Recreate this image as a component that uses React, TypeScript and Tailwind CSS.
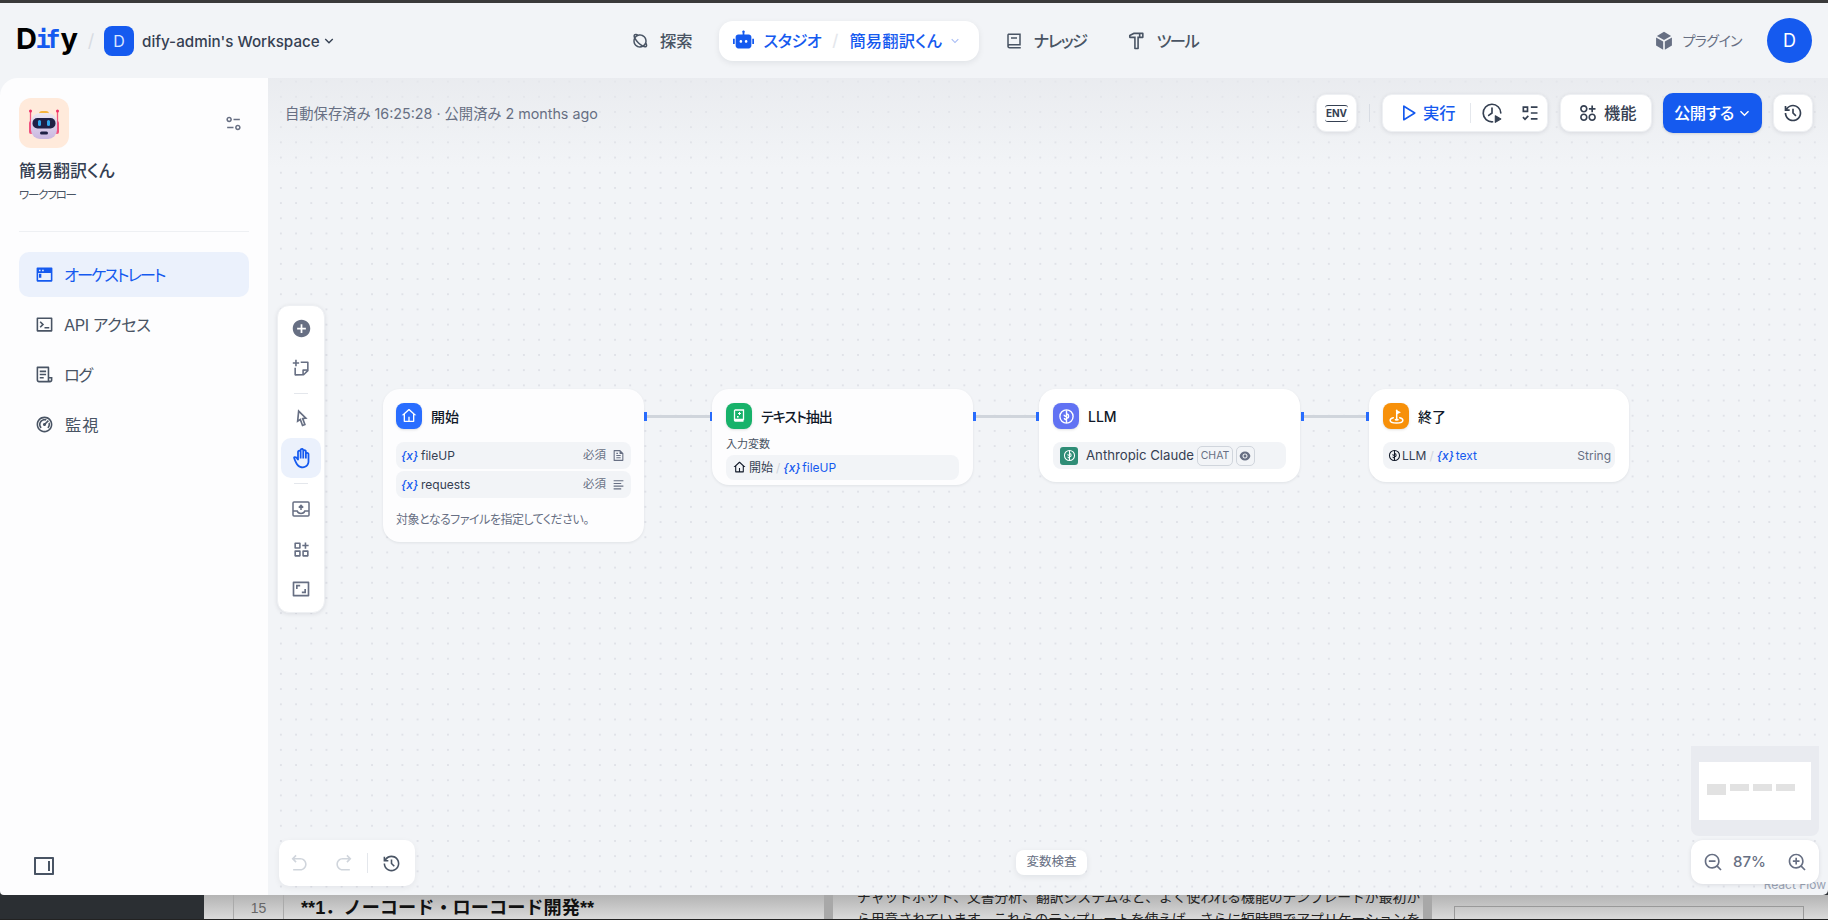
import React from "react";
import {
  RiPlanetLine, RiRobot2Fill, RiBook2Line, RiHammerLine, RiBox3Fill, RiArrowDownSLine, RiEqualizer2Line,
  RiTerminalWindowFill, RiTerminalBoxLine, RiFileList3Line, RiDashboard2Line, RiAddCircleFill, RiStickyNoteAddLine,
  RiCursorLine, RiHand, RiFunctionAddLine, RiAspectRatioLine, RiPlayLargeLine, RiListCheck3,
  RiApps2AddLine, RiHistoryLine, RiArrowGoBackLine, RiArrowGoForwardLine, RiZoomOutLine, RiZoomInLine, RiHome4Line,
  RiEyeFill, RiAlignLeft, RiFileTextLine, RiLayoutRight2Line,
} from "react-icons/ri";

function Robot() {
  return (
    <svg viewBox="0 0 50 50" className="w-[50px] h-[50px]">
      <defs>
        <linearGradient id="h" x1="0" y1="0" x2="0" y2="1">
          <stop offset="0" stopColor="#ece8f2" />
          <stop offset="1" stopColor="#c9b6e0" />
        </linearGradient>
      </defs>
      <path d="M11.5 13v12M38.5 13v12" stroke="#f0567f" strokeWidth="1.3" />
      <circle cx="11.5" cy="13" r="1.5" fill="#ef2f66" />
      <circle cx="38.5" cy="13" r="1.5" fill="#ef2f66" />
      <rect x="10" y="23" width="4" height="13" rx="2" fill="#f0527e" />
      <rect x="36" y="23" width="4" height="13" rx="2" fill="#f0527e" />
      <path d="M20 16c0-2 1-3 3-3h4c2 0 3 1 3 3z" fill="#f5b53f" />
      <rect x="12" y="15" width="26" height="26" rx="9" fill="url(#h)" />
      <rect x="13.5" y="20" width="23" height="10.5" rx="5" fill="#1f2145" />
      <rect x="19" y="22" width="3" height="6" rx="1.5" fill="#2fa8ee" />
      <rect x="28" y="22" width="3" height="6" rx="1.5" fill="#2fa8ee" />
      <rect x="21" y="33.5" width="8" height="3" rx="1.5" fill="#1f2145" />
    </svg>
  );
}

function ClockPlay() {
  return (
    <svg viewBox="0 0 20 20" fill="none" stroke="#354052" strokeWidth="1.5" className="w-[22px] h-[22px]">
      <path d="M18 10a8 8 0 1 0-7.5 8" strokeLinecap="round" />
      <path d="M10 5.5V10l-3 2.2" strokeLinecap="round" />
      <path d="M13 12.5l5 3-5 3z" fill="#354052" strokeLinejoin="round" strokeWidth="1" />
    </svg>
  );
}

function InboxUp() {
  return (
    <svg viewBox="0 0 20 20" fill="none" stroke="#676f83" strokeWidth="1.5" className="w-[20px] h-[20px]">
      <rect x="2" y="3" width="16" height="14" rx="1" />
      <path d="M2 12h4.2c.4 1.6 2 2.4 3.8 2.4s3.4-.8 3.8-2.4H18" />
      <path d="M10 11V6.5M7.8 8.6L10 6.4l2.2 2.2" />
    </svg>
  );
}

function Brain({ className }: { className: string }) {
  return (
    <svg viewBox="0 0 16 16" fill="none" stroke="currentColor" strokeWidth="1.3" className={className}>
      <circle cx="8" cy="8" r="6.2" />
      <path d="M8 2v12M8 5.5c1.8 0 2 1.4 2 2.2S9 9.5 8 9.5M8 8c-1.5 0-2.2-.8-2.2-1.6M8 11c-1.3 0-2-.8-2-1.6" />
    </svg>
  );
}

function Flag() {
  return (
    <svg viewBox="0 0 16 16" fill="none" className="w-[17px] h-[17px]">
      <path d="M8.2 2v8" stroke="#fff" strokeWidth="1.4" strokeLinecap="round" />
      <path d="M8.2 2l4 2-4 2z" fill="#fff" />
      <path d="M5 9.2C3 9.7 2 10.6 2 11.6c0 1.6 2.7 2.6 6 2.6s6-1 6-2.6c0-1-1-1.9-3-2.4" stroke="#fff" strokeWidth="1.4" strokeLinecap="round" />
      <ellipse cx="8.2" cy="11" rx="2" ry=".9" fill="#fff" />
    </svg>
  );
}

function DocIcon() {
  return (
    <svg viewBox="0 0 16 16" fill="none" className="w-[16px] h-[16px]">
      <path d="M3.5 12.2V2.8c0-.5.4-.8.8-.8h8.2v9.5H4.2c-.4 0-.7.3-.7.7s.3.8.7.8h8.3" stroke="#fff" strokeWidth="1.3" />
      <path d="M8.5 4v3M7 5.5h3" stroke="#fff" strokeWidth="1" />
      <rect x="6" y="8" width="1.6" height="1.6" fill="#fff" />
    </svg>
  );
}

function X() {
  return <span className="w-[16px] text-center text-[12px] leading-none italic font-medium text-[#155aef] shrink-0">{"{x}"}</span>;
}

function NodeTitle({ bg, icon, title, cls }: { bg: string; icon: React.ReactNode; title: string; cls?: string }) {
  return (
    <div className="flex items-center gap-[9px] h-[26px]">
      <div className={`w-[26px] h-[26px] rounded-[8px] flex items-center justify-center text-white shadow-sm ${bg}`}>{icon}</div>
      <span className={`text-[14px] font-medium text-[#101828] ${cls ?? ""}`}>{title}</span>
    </div>
  );
}

function NavItem({ icon, label, active, cls }: { icon: React.ReactNode; label: string; active?: boolean; cls?: string }) {
  return (
    <div className={`flex items-center gap-[10px] h-[45px] pl-[16px] rounded-[10px] text-[16.3px] ${active ? "bg-[#ebf1fc] text-[#155aef]" : "text-[#495464]"}`}>
      {icon}
      <span className={`pt-[2px] ${cls ?? ""}`}>{label}</span>
    </div>
  );
}

function Tool({ children }: { children: React.ReactNode }) {
  return <div className="h-[40px] flex items-center justify-center text-[#676f83]">{children}</div>;
}

export default function App() {
  const card = "bg-white rounded-[10px] shadow-[0_1px_4px_rgba(16,24,40,0.1)] border border-[#eef0f3]";
  return (
    <div className={`w-[1828px] h-[920px] overflow-hidden flex flex-col bg-[#f2f4f7] font-['Inter','Noto_Sans_CJK_JP',sans-serif] [font-feature-settings:"palt"]`}>
      <div className="h-[3px] bg-[#3a3a3a] shrink-0" />
      <header className="h-[75px] shrink-0 flex items-center pr-[16px]">
        <div className="w-[632px] flex items-center pl-[16px] shrink-0">
          <span className="w-[62px] pb-[4px] text-[29px] leading-none font-bold text-black tracking-[-1.5px] flex">
            D<span className="text-[#155aef] font-['DejaVu_Sans_Mono'] tracking-[-5px] text-[25px] pt-[3px] pr-[5px]">if</span>y
          </span>
          <span className="w-[26px] text-center text-[#d8dce3] text-[18px]">/</span>
          <div className="w-[30px] h-[30px] rounded-[8px] bg-[#155aef] text-[#dbe6ff] text-[16px] flex items-center justify-center">D</div>
          <span className="ml-[8px] pt-[3px] text-[15.2px] font-medium text-[#354052]">dify-admin's Workspace</span>
          <RiArrowDownSLine className="w-[16px] h-[16px] text-[#354052] ml-[1px]" />
        </div>
        <nav className="flex items-center text-[16.3px] font-medium text-[#495464]">
          <RiPlanetLine className="w-[18px] h-[18px] mr-[11px] -ml-[1px]" />
          <span className="pt-[1px]">探索</span>
          <div className="ml-[26px] h-[40px] w-[260px] pl-[14px] rounded-[14px] bg-white shadow-[0_2px_6px_rgba(16,24,40,0.08)] flex items-center text-[#155aef]">
            <RiRobot2Fill className="w-[21px] h-[21px] mr-[10px]" />
            <span className="pt-[1px] tracking-[-0.5px]">スタジオ</span>
            <span className="w-[28px] text-center text-[#e4e7ec]">/</span>
            <span className="pt-[1px] tracking-[0.2px]">簡易翻訳くん</span>
            <RiArrowDownSLine className="w-[14px] h-[14px] ml-[6px] text-[#a9bdf5]" />
          </div>
          <RiBook2Line className="w-[18px] h-[18px] ml-[26px] mr-[11px]" />
          <span className="pt-[1px] tracking-[-1.4px]">ナレッジ</span>
          <RiHammerLine className="w-[19px] h-[19px] ml-[40px] mr-[11px]" />
          <span className="pt-[1px] tracking-[-1.6px]">ツール</span>
        </nav>
        <div className="ml-auto flex items-center">
          <RiBox3Fill className="w-[20px] h-[20px] text-[#676f83] mr-[9px]" />
          <span className="text-[14px] text-[#676f83] tracking-[-0.6px]">プラグイン</span>
          <div className="ml-[25px] w-[45px] h-[45px] rounded-full bg-[#155aef] text-white text-[18px] flex items-center justify-center">D</div>
        </div>
      </header>

      <main className="h-[817px] shrink-0 flex bg-[linear-gradient(to_bottom,#f2f4f7_50%,#2b2f33_50%)]">
        <aside className="w-[268px] shrink-0 bg-[#fdfdfe] rounded-tl-[18px] rounded-bl-[4px] flex flex-col px-[19px] pt-[20px]">
          <div className="flex items-center justify-between h-[50px]">
            <div className="w-[50px] h-[50px] rounded-[12px] bg-[#ffeadb] overflow-hidden"><Robot /></div>
            <RiEqualizer2Line className="w-[19px] h-[19px] mr-[6px] text-[#676f83]" />
          </div>
          <div className="mt-[11px] text-[17px] leading-[24px] font-medium text-[#354052]">簡易翻訳くん</div>
          <div className="mt-[4px] text-[11.5px] leading-[16px] tracking-[-1.2px] text-[#495464]">ワークフロー</div>
          <div className="mt-[28px] h-px bg-[#eef0f3]" />
          <div className="mt-[20px] flex flex-col gap-[5px]">
            <NavItem active cls="tracking-[-2px]" label="オーケストレート" icon={<RiTerminalWindowFill className="w-[19px] h-[19px]" />} />
            <NavItem cls="tracking-[-0.4px]" label="API アクセス" icon={<RiTerminalBoxLine className="w-[19px] h-[19px] text-[#495464]" />} />
            <NavItem cls="tracking-[-1.5px]" label="ログ" icon={<RiFileList3Line className="w-[19px] h-[19px] text-[#495464]" />} />
            <NavItem cls="ml-px tracking-[1px]" label="監視" icon={<RiDashboard2Line className="w-[19px] h-[19px] text-[#495464]" />} />
          </div>
          <div className="mt-auto mb-[17px] pl-[13px]">
            <RiLayoutRight2Line className="w-[24px] h-[24px] text-[#495464]" />
          </div>
        </aside>

        <section className="relative flex-1 rounded-br-[5px] overflow-hidden bg-[#f2f4f7] bg-[radial-gradient(circle,#e0e2e8_1px,transparent_1.2px)] bg-[size:15.2px_15.2px] bg-[position:5.3px_-4px]">
          <div className="absolute inset-x-0 top-0 h-[90px] bg-gradient-to-b from-[#e6e8ec]/70 to-transparent" />

          <div className="absolute left-[17px] top-[26px] text-[14.3px] leading-[20px] text-[#676f83]">自動保存済み 16:25:28 · 公開済み 2 months ago</div>

          <div className="absolute right-[15px] top-[15px] flex items-center h-[40px]">
            <div className={`${card} w-[41px] h-[38px] flex items-center justify-center`}>
              <span className="text-[10px] leading-none font-bold text-[#354052] border-y border-[#354052] rounded-[3px] py-[2.5px] px-[1px]">ENV</span>
            </div>
            <div className="w-px h-[18px] bg-[#d8dce3] mx-[12px]" />
            <div className={`${card} w-[166px] h-[38px] flex items-center pl-[17px]`}>
              <RiPlayLargeLine className="w-[20px] h-[20px] text-[#155aef] -ml-[2px]" />
              <span className="ml-[5px] text-[16.3px] font-medium text-[#155aef]">実行</span>
              <div className="w-px h-[20px] bg-[#e4e7ec] ml-[14px] mr-[10px]" />
              <ClockPlay />
              <RiListCheck3 className="w-[20px] h-[20px] ml-[17px] text-[#354052]" />
            </div>
            <div className={`${card} ml-[12px] w-[92px] h-[38px] flex items-center pl-[17px]`}>
              <RiApps2AddLine className="w-[20px] h-[20px] text-[#354052]" />
              <span className="ml-[6px] text-[16.3px] font-medium text-[#354052]">機能</span>
            </div>
            <div className="ml-[11px] w-[99px] h-[40px] rounded-[10px] bg-[#155aef] text-white flex items-center pl-[11px] shadow-sm">
              <span className="text-[16.3px] font-medium tracking-[-0.5px]">公開する</span>
              <RiArrowDownSLine className="w-[17px] h-[17px] ml-[2px]" />
            </div>
            <div className={`${card} ml-[11px] w-[40px] h-[38px] flex items-center justify-center`}>
              <RiHistoryLine className="w-[20px] h-[20px] text-[#354052]" />
            </div>
          </div>

          {/* Left tool palette */}
          <div className={`${card} absolute left-[9px] top-[227px] w-[48px] h-[308px] rounded-[12px] px-[3px] py-[2px] flex flex-col`}>
            <Tool><RiAddCircleFill className="w-[21px] h-[21px]" /></Tool>
            <Tool><RiStickyNoteAddLine className="w-[19px] h-[19px]" /></Tool>
            <div className="mx-[13px] h-px bg-[#e4e7ec] mt-[5px] mb-[4px] shrink-0" />
            <Tool><RiCursorLine className="w-[20px] h-[20px]" /></Tool>
            <div className="h-[40px] shrink-0 rounded-[10px] bg-[#ebf1fc] flex items-center justify-center text-[#155aef]"><RiHand className="w-[21px] h-[21px]" /></div>
            <div className="mx-[13px] h-px bg-[#e4e7ec] my-[5px] shrink-0" />
            <Tool><InboxUp /></Tool>
            <Tool><RiFunctionAddLine className="w-[19px] h-[19px]" /></Tool>
            <Tool><RiAspectRatioLine className="w-[20px] h-[20px]" /></Tool>
          </div>

          {/* Edges */}
          {[
            ["left-[379px] w-[64px]"],
            ["left-[707px] w-[62px]"],
            ["left-[1035px] w-[64px]"],
          ].map(([c]) => (
            <div key={c} className={`absolute top-[337px] h-[3px] bg-[#d0d5dc] ${c}`} />
          ))}
          {["left-[376px]", "left-[442px]", "left-[705px]", "left-[768px]", "left-[1033px]", "left-[1098px]"].map((c) => (
            <div key={c} className={`absolute top-[334px] w-[3px] h-[9px] bg-[#296dff] ${c}`} />
          ))}

          {/* Start node */}
          <div className="absolute left-[115px] top-[311px] w-[261px] h-[153px] rounded-[17px] bg-[#fdfdfe] shadow-[0_1px_3px_rgba(16,24,40,0.08)] px-[13px] pt-[14px]">
            <NodeTitle bg="bg-[#296dff]" title="開始" icon={<RiHome4Line className="w-[16px] h-[16px]" />} />
            <div className="mt-[13px] flex flex-col gap-[2px]">
              <div className="h-[27px] rounded-[8px] bg-[#f2f4f7] flex items-center pl-[5px] pr-[6px] text-[12px]">
                <X /><span className="ml-[4px] pt-[1px] text-[#354052]">fileUP</span>
                <span className="ml-auto text-[#676f83] text-[11.5px]">必須</span>
                <RiFileTextLine className="ml-[6px] w-[13px] h-[13px] text-[#676f83]" />
              </div>
              <div className="h-[27px] rounded-[8px] bg-[#f2f4f7] flex items-center pl-[5px] pr-[6px] text-[12px]">
                <X /><span className="ml-[4px] pt-[1px] text-[#354052]">requests</span>
                <span className="ml-auto text-[#676f83] text-[11.5px]">必須</span>
                <RiAlignLeft className="ml-[6px] w-[13px] h-[13px] text-[#676f83]" />
              </div>
            </div>
            <div className="mt-[13px] text-[12px] leading-[18px] tracking-[-0.5px] text-[#676f83]">対象となるファイルを指定してください。</div>
          </div>

          {/* Doc extractor node */}
          <div className="absolute left-[444px] top-[311px] w-[261px] h-[96px] rounded-[17px] bg-[#fdfdfe] shadow-[0_1px_3px_rgba(16,24,40,0.08)] px-[14px] pt-[14px]">
            <NodeTitle bg="bg-[#17b26a]" cls="tracking-[-1px]" title="テキスト抽出" icon={<DocIcon />} />
            <div className="mt-[8px] text-[11px] leading-[14px] text-[#495464]">入力変数</div>
            <div className="mt-[4px] h-[25px] rounded-[8px] bg-[#f2f4f7] flex items-center pl-[7px] text-[12px]">
              <RiHome4Line className="w-[13px] h-[13px] text-[#101828]" />
              <span className="ml-[3px] text-[#354052]">開始</span>
              <span className="mx-[3px] text-[#d0d5dc]">/</span>
              <X /><span className="ml-[3px] text-[#155aef]">fileUP</span>
            </div>
          </div>

          {/* LLM node */}
          <div className="absolute left-[771px] top-[311px] w-[261px] h-[93px] rounded-[17px] bg-white shadow-[0_1px_3px_rgba(16,24,40,0.08)] px-[14px] pt-[14px]">
            <NodeTitle bg="bg-[#6172f3]" title="LLM" icon={<Brain className="w-[17px] h-[17px]" />} />
            <div className="mt-[13px] h-[27px] rounded-[8px] bg-[#f2f4f7] flex items-center pl-[7px] text-[13px]">
              <div className="w-[18px] h-[18px] rounded-[3px] bg-[#2f8d76] flex items-center justify-center text-white"><Brain className="w-[13px] h-[13px]" /></div>
              <span className="ml-[8px] pt-[1px] text-[13.2px] text-[#354052]">Anthropic Claude</span>
              <span className="ml-[3px] w-[36px] h-[20px] rounded-[5px] border border-[#d0d5dc] text-[10.5px] text-[#676f83] flex items-center justify-center">CHAT</span>
              <span className="ml-[3px] w-[19px] h-[20px] rounded-[5px] border border-[#d0d5dc] flex items-center justify-center"><RiEyeFill className="w-[12px] h-[12px] text-[#676f83]" /></span>
            </div>
          </div>

          {/* End node */}
          <div className="absolute left-[1101px] top-[311px] w-[260px] h-[93px] rounded-[17px] bg-white shadow-[0_1px_3px_rgba(16,24,40,0.08)] px-[14px] pt-[14px]">
            <NodeTitle bg="bg-[#f79009]" title="終了" icon={<Flag />} />
            <div className="mt-[13px] h-[27px] rounded-[8px] bg-[#f2f4f7] flex items-center pl-[5px] pr-[4px] text-[12px]">
              <Brain className="w-[13px] h-[13px] text-[#101828]" />
              <span className="ml-px text-[#354052]">LLM</span>
              <span className="mx-[3px] text-[#d0d5dc]">/</span>
              <X /><span className="ml-[3px] text-[#155aef]">text</span>
              <span className="ml-auto text-[#676f83]">String</span>
            </div>
          </div>

          {/* Bottom-left undo bar */}
          <div className="absolute left-[11px] top-[762px] w-[136px] h-[46px] rounded-[10px] bg-white shadow-[0_2px_6px_rgba(16,24,40,0.06)] flex items-center pl-[11px]">
            <RiArrowGoBackLine className="w-[19px] h-[19px] text-[#d0d5dc]" />
            <RiArrowGoForwardLine className="w-[19px] h-[19px] ml-[25px] text-[#d0d5dc]" />
            <div className="w-px h-[20px] bg-[#e4e7ec] mx-[14px]" />
            <RiHistoryLine className="w-[19px] h-[19px] text-[#495464]" />
          </div>

          <div className="absolute left-[748px] top-[772px] w-[71px] h-[25px] rounded-[8px] bg-white shadow-[0_2px_6px_rgba(16,24,40,0.08)] text-[12.5px] text-[#676f83] flex items-center justify-center">変数検査</div>

          <div className="absolute right-[2px] bottom-[2px] text-[12px] leading-[16px] text-[#98a2b2]">React Flow</div>

          <div className="absolute left-[1423px] top-[668px] w-[128px] h-[90px] bg-[#e9ebf0] rounded-b-[8px] flex items-center justify-center">
            <div className="w-[112px] h-[58px] bg-white flex items-start gap-[4px] pl-[8px] pt-[22px]">
              <div className="w-[19px] h-[11px] bg-[#e2e2e2]" />
              <div className="w-[19px] h-[7px] bg-[#e2e2e2]" />
              <div className="w-[19px] h-[7px] bg-[#e2e2e2]" />
              <div className="w-[19px] h-[7px] bg-[#e2e2e2]" />
            </div>
          </div>

          <div className="absolute left-[1423px] top-[762px] w-[128px] h-[44px] rounded-[12px] bg-white shadow-[0_1px_4px_rgba(16,24,40,0.1)] flex items-center pl-[12px]">
            <RiZoomOutLine className="w-[20px] h-[20px] text-[#676f83]" />
            <span className="ml-[10px] w-[33px] text-[15px] font-medium text-[#676f83]">87%</span>
            <RiZoomInLine className="w-[20px] h-[20px] ml-[21px] text-[#676f83]" />
          </div>
        </section>
      </main>

      <div className="h-[25px] shrink-0 flex bg-gradient-to-b from-[#b4b4b4] to-[#dadada] border-b border-[#222] overflow-hidden font-['Liberation_Sans','Noto_Sans_CJK_JP',sans-serif] [font-feature-settings:normal]">
        <div className="w-[204px] bg-[#2b2f33] shrink-0" />
        <div className="w-[29px] shrink-0" />
        <div className="w-[51px] shrink-0 border-x border-[#aaa] text-center text-[14px] leading-[27px] text-[#666]">15</div>
        <div className="w-[540px] shrink-0 pl-[17px] text-[18.2px] leading-[27px] font-bold text-[#111] whitespace-nowrap">**1．ノーコード・ローコード開発**</div>
        <div className="w-[9px] shrink-0 bg-[#a8a8a8]" />
        <div className="w-[590px] shrink-0 pl-[24px] -mt-[8px] text-[13.8px] leading-[22px] text-[#222] whitespace-nowrap overflow-hidden">
          <div>チャットボット、文書分析、翻訳システムなど、よく使われる機能のテンプレートが最初か</div>
          <div>ら用意されています。これらのテンプレートを使えば、さらに短時間でアプリケーションを</div>
        </div>
        <div className="w-[9px] shrink-0 bg-[#a8a8a8]" />
        <div className="flex-1 pl-[22px] pr-[24px] pt-[11px]">
          <div className="h-[20px] border border-[#999]" />
        </div>
      </div>
    </div>
  );
}
